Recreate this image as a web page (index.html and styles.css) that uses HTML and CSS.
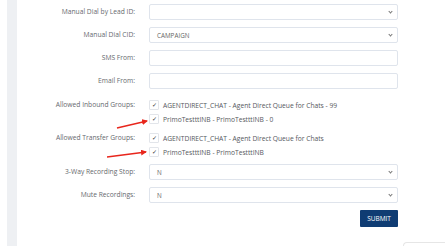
FILE: index.html
```html
<!DOCTYPE html>
<html lang="en">
<head>
    <meta charset="UTF-8">
    <title>User Settings</title>
    <link rel="stylesheet" href="styles.css">
</head>
<body>
    <div class="page">
        <div class="side-strip"></div>
        <div class="panel">
            <form class="settings-form">
                <div class="field-row">
                    <label class="field-label">Manual Dial by Lead ID:</label>
                    <div class="select"><span></span><i class="chevron"></i></div>
                </div>
                <div class="field-row">
                    <label class="field-label">Manual Dial CID:</label>
                    <div class="select"><span>CAMPAIGN</span><i class="chevron"></i></div>
                </div>
                <div class="field-row">
                    <label class="field-label">SMS From:</label>
                    <div class="input"></div>
                </div>
                <div class="field-row">
                    <label class="field-label">Email From:</label>
                    <div class="input"></div>
                </div>

                <div class="check-row">
                    <label class="field-label">Allowed Inbound Groups:</label>
                    <div class="check-list">
                        <div class="check-item"><span class="box">&#10003;</span>AGENTDIRECT_CHAT - Agent Direct Queue for Chats - 99</div>
                        <div class="check-item"><span class="box">&#10003;</span>PrimoTestttINB - PrimoTestttINB - 0</div>
                    </div>
                </div>
                <div class="check-row">
                    <label class="field-label">Allowed Transfer Groups:</label>
                    <div class="check-list">
                        <div class="check-item"><span class="box">&#10003;</span>AGENTDIRECT_CHAT - Agent Direct Queue for Chats</div>
                        <div class="check-item"><span class="box">&#10003;</span>PrimoTestttINB - PrimoTestttINB</div>
                    </div>
                </div>

                <div class="field-row">
                    <label class="field-label">3-Way Recording Stop:</label>
                    <div class="select"><span>N</span><i class="chevron"></i></div>
                </div>
                <div class="field-row">
                    <label class="field-label">Mute Recordings:</label>
                    <div class="select"><span>N</span><i class="chevron"></i></div>
                </div>
                <div class="submit-row">
                    <button type="button" class="btn-submit">SUBMIT</button>
                </div>
            </form>
        </div>
    </div>

    <!-- annotation arrows drawn over the form -->
    <svg class="annotations" width="445" height="246" viewBox="0 0 445 246">
        <defs>
            <marker id="head" markerWidth="6" markerHeight="6" refX="5" refY="3" orient="auto" markerUnits="userSpaceOnUse">
                <path d="M0,0 L6,3 L0,6 Z" fill="#e8261c"/>
            </marker>
        </defs>
        <line x1="117" y1="128" x2="147" y2="121" stroke="#e8261c" stroke-width="1.4" marker-end="url(#head)"/>
        <line x1="107" y1="157" x2="146" y2="152" stroke="#e8261c" stroke-width="1.4" marker-end="url(#head)"/>
    </svg>

    <div class="corner-card"></div>
</body>
</html>
```

FILE: styles.css
```css
* {
    margin: 0;
    padding: 0;
    box-sizing: border-box;
}

body {
    width: 445px;
    height: 246px;
    background: #fff;
    position: relative;
    overflow: hidden;
    font-family: 'Open Sans', 'Noto Sans', sans-serif;
    font-size: 6.7px;
    color: #555;
}

.page {
    display: flex;
    height: 100%;
}

.side-strip {
    width: 10px;
    margin-left: 7px;
    background: #eef0f3;
}

.panel {
    flex: 1;
    padding-top: 4px;
}

.settings-form {
    display: flex;
    flex-direction: column;
}

.field-row,
.check-row {
    display: flex;
    align-items: flex-start;
}

.field-row {
    margin-bottom: 7px;
    align-items: center;
}

.check-row {
    margin-top: 2px;
    margin-bottom: 5px;
}

.check-row + .check-row {
    margin-top: 0;
}

.field-label {
    width: 118px;
    text-align: right;
    margin-right: 14px;
    color: #66696e;
    line-height: 14px;
}

.input,
.select {
    width: 249px;
    height: 16px;
    border: 1px solid #dfe4ec;
    border-radius: 2px;
    background: #fff;
    display: flex;
    align-items: center;
    justify-content: space-between;
    padding: 0 5px 0 7px;
    color: #666;
    font-size: 6.3px;
}

.chevron {
    width: 3px;
    height: 3px;
    border-right: 1px solid #777;
    border-bottom: 1px solid #777;
    transform: rotate(45deg);
    margin-top: -2px;
}

.check-list {
    display: flex;
    flex-direction: column;
}

.check-item {
    display: flex;
    align-items: center;
    height: 14px;
    color: #55585d;
}

.box {
    width: 10px;
    height: 10px;
    border: 1px solid #e2e5ea;
    border-radius: 1px;
    margin-right: 4px;
    display: flex;
    align-items: center;
    justify-content: center;
    font-size: 6px;
    color: #333;
}

.submit-row {
    width: 381px;
    display: flex;
    justify-content: flex-end;
}

.btn-submit {
    width: 38px;
    height: 17px;
    border: none;
    border-radius: 1px;
    background: #0f3c73;
    color: #fff;
    font-family: 'Open Sans', sans-serif;
    font-size: 6.5px;
}

.annotations {
    position: absolute;
    top: 0;
    left: 0;
    pointer-events: none;
}

.corner-card {
    position: absolute;
    left: 403px;
    top: 242px;
    width: 42px;
    height: 4px;
    border-top: 1px solid #e6e6e6;
    border-left: 1px solid #e6e6e6;
    border-radius: 4px 0 0 0;
}
```
